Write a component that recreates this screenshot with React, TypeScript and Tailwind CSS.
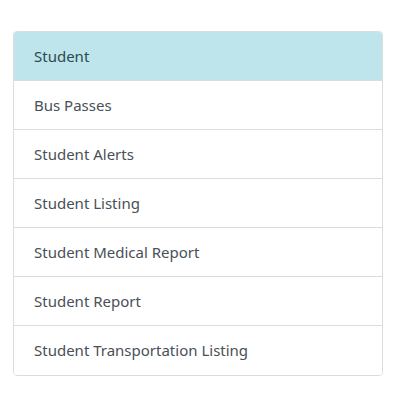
export default function App() {
  const items = [
    "Bus Passes",
    "Student Alerts",
    "Student Listing",
    "Student Medical Report",
    "Student Report",
    "Student Transportation Listing",
  ];

  return (
    <div className="w-[407px] h-[407px] bg-white pt-[31px] pl-[13px] font-['Noto_Sans',sans-serif]">
      <div className="w-[370px] rounded border border-[#dcdcdc] overflow-hidden">
        {/* Header */}
        <div className="h-[49px] flex items-center px-5 bg-[#bee5eb] text-[#2d4a52] text-[15px] border-b border-[#dcdcdc]">
          Student
        </div>
        {items.map((item, i) => (
          <div
            key={item}
            className={`h-[49px] flex items-center px-5 text-[15px] text-[#495057] bg-white ${i < items.length - 1 ? "border-b border-[#dcdcdc]" : ""}`}
          >
            {item}
          </div>
        ))}
      </div>
    </div>
  );
}
